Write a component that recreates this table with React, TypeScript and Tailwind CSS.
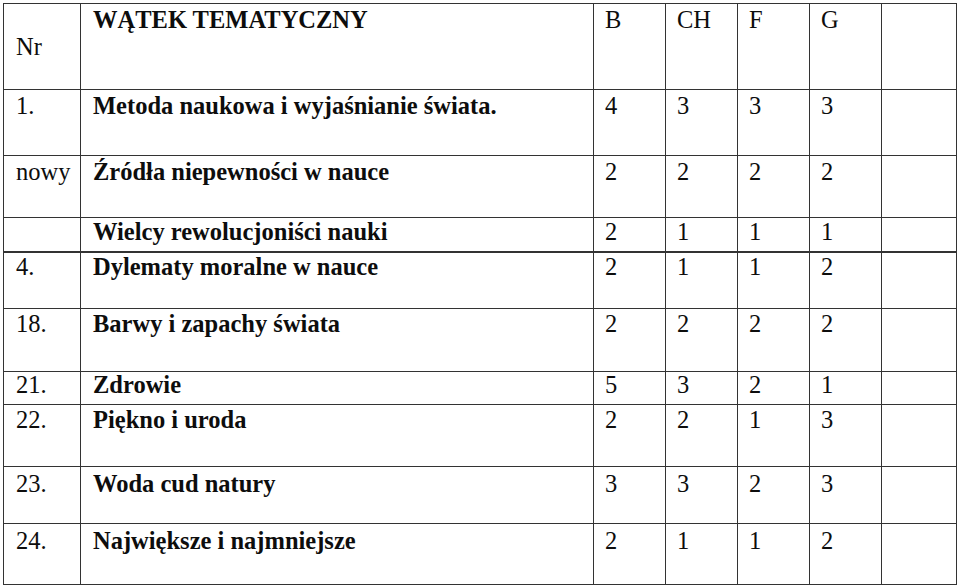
import React from "react";

type Row = {
  nr: string;
  topic: string;
  vals: string[];
  h: string;
  pt: string;
  thick?: boolean;
};

const rows: Row[] = [
  { nr: "1.", topic: "Metoda naukowa i wyjaśnianie świata.", vals: ["4", "3", "3", "3"], h: "h-[66px]", pt: "pt-[3px]" },
  { nr: "nowy", topic: "Źródła niepewności w nauce", vals: ["2", "2", "2", "2"], h: "h-[62px]", pt: "pt-[3px]" },
  { nr: "", topic: "Wielcy rewolucjoniści nauki", vals: ["2", "1", "1", "1"], h: "h-[34px]", pt: "pt-[1px]", thick: true },
  { nr: "4.", topic: "Dylematy moralne w nauce", vals: ["2", "1", "1", "2"], h: "h-[57px]", pt: "pt-[1px]" },
  { nr: "18.", topic: "Barwy i zapachy świata", vals: ["2", "2", "2", "2"], h: "h-[63px]", pt: "pt-[2px]" },
  { nr: "21.", topic: "Zdrowie", vals: ["5", "3", "2", "1"], h: "h-[33px]", pt: "pt-[0px]" },
  { nr: "22.", topic: "Piękno i uroda", vals: ["2", "2", "1", "3"], h: "h-[62px]", pt: "pt-[2px]" },
  { nr: "23.", topic: "Woda cud natury", vals: ["3", "3", "2", "3"], h: "h-[57px]", pt: "pt-[4px]" },
  { nr: "24.", topic: "Największe i najmniejsze", vals: ["2", "1", "1", "2"], h: "h-[61px]", pt: "pt-[4px]" },
];

function T({ children, bold }: { children: React.ReactNode; bold?: boolean }) {
  return (
    <span className={"whitespace-nowrap " + (bold ? "font-bold" : "font-normal")}>
      {children}
    </span>
  );
}

export default function App() {
  const cell = "border border-[#333] align-top pl-[11px] text-left";
  return (
    <div className="w-[960px] h-[586px] bg-white pt-[3px] pl-[3px] overflow-hidden">
      <table
        className="table-fixed border-collapse w-[953px] text-[24.5px] leading-[26px] text-[#0d0d0d]"
        style={{ fontFamily: '"Liberation Serif", "Times New Roman", serif' }}
      >
        <colgroup>
          <col className="w-[77px]" />
          <col className="w-[513px]" />
          <col className="w-[72px]" />
          <col className="w-[72px]" />
          <col className="w-[72px]" />
          <col className="w-[72px]" />
          <col className="w-[75px]" />
        </colgroup>
        <tbody>
          <tr className="h-[86px]">
            <td className="border border-[#333] align-middle pl-[12px] pt-[1px] text-left">
              <T>Nr</T>
            </td>
            <td className={cell + " pl-[12px] pt-[3px]"}>
              <T bold>WĄTEK TEMATYCZNY</T>
            </td>
            <td className={cell + " pt-[3px]"}><T>B</T></td>
            <td className={cell + " pt-[3px]"}><T>CH</T></td>
            <td className={cell + " pt-[3px]"}><T>F</T></td>
            <td className={cell + " pt-[3px]"}><T>G</T></td>
            <td className={cell}></td>
          </tr>
          {rows.map((r, i) => (
            <tr key={i} className={r.h}>
              <td className={cell + " pl-[12px] " + r.pt + (r.thick ? " border-b-2" : "")}>
                <T>{r.nr}</T>
              </td>
              <td className={cell + " pl-[12px] " + r.pt + (r.thick ? " border-b-2" : "")}>
                <T bold>{r.topic}</T>
              </td>
              {r.vals.map((v, j) => (
                <td key={j} className={cell + " " + r.pt + (r.thick ? " border-b-2" : "")}>
                  <T>{v}</T>
                </td>
              ))}
              <td className={cell + (r.thick ? " border-b-2" : "")}></td>
            </tr>
          ))}
        </tbody>
      </table>
    </div>
  );
}
